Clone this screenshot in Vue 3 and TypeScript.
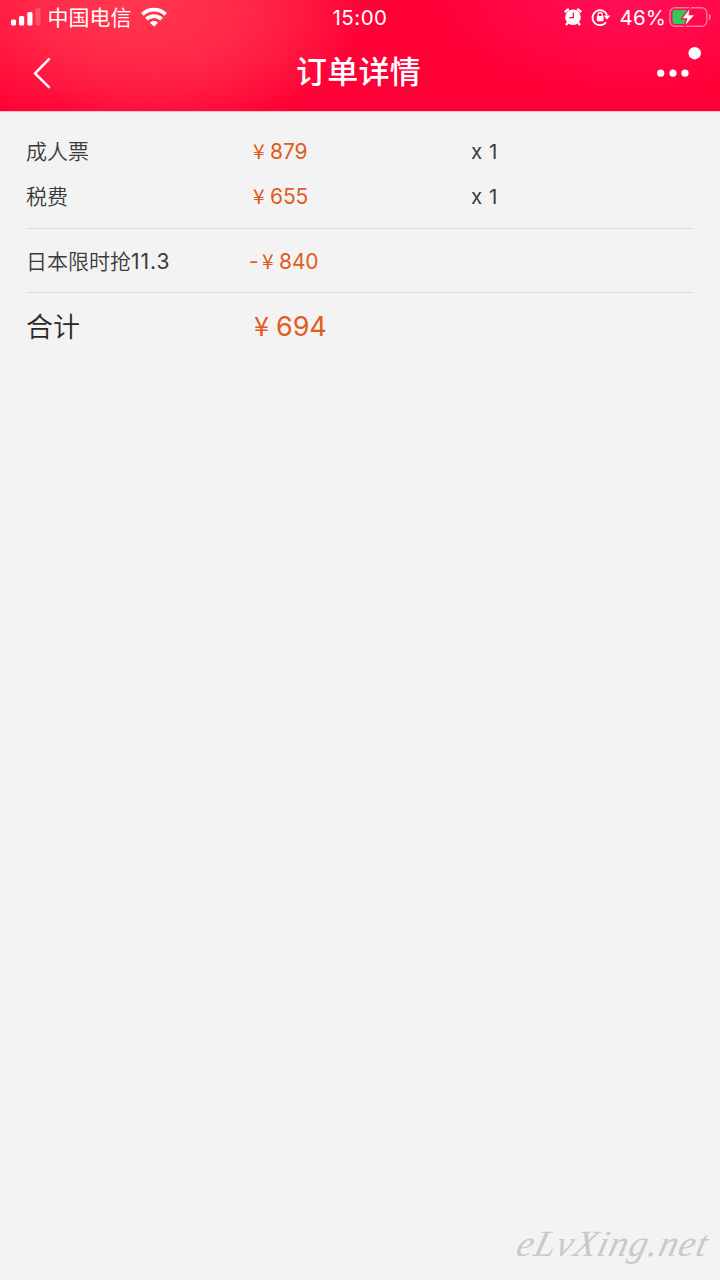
<script setup lang="ts">
interface Fare {
  label: string
  amount: string
  quantity: number
}

const fares: Fare[] = [
  { label: '成人票', amount: '879', quantity: 1 },
  { label: '税费', amount: '655', quantity: 1 },
]
</script>

<template>
  <main class="screen">
    <header class="header">
      <div class="status">
        <div class="status-left">
          <svg class="signal" width="30" height="18" viewBox="0 0 30 18" fill="#fff">
            <rect x="0" y="11.5" width="5" height="6" rx="1.5" />
            <rect x="8" y="8" width="5.2" height="9.5" rx="1.5" />
            <rect x="16.3" y="4" width="5.2" height="13.5" rx="1.5" />
            <rect x="24.5" y="0" width="5" height="17.5" rx="1.5" opacity=".2" />
          </svg>
          <span class="carrier">中国电信</span>
          <svg class="wifi" width="26" height="20" viewBox="0 0 26 20" fill="none" stroke="#fff" stroke-width="3.8">
            <path d="M1.3 7.4C7.8 1 18.2 1 24.7 7.4" />
            <path d="M5.4 12.2C9.6 8 16.4 8 20.6 12.2" />
            <path d="M13 19.6L8.9 15.7Q13 12 17.1 15.7Z" fill="#fff" stroke="none" />
          </svg>
        </div>
        <time class="clock">15:00</time>
        <div class="status-right">
          <svg class="alarm" width="18" height="18" viewBox="0 0 18 18">
            <circle cx="9" cy="9.2" r="7.8" fill="#fff" />
            <path d="M1.5 3.5L4 1.5M14 1.5L16.5 3.5M4 14.5L2.6 16.3M14 14.5L15.4 16.3" stroke="#fff" stroke-width="2.3" stroke-linecap="round" />
            <path d="M9.3 4.5V9.6H5.2" fill="none" stroke="#ff0748" stroke-width="1.3" />
          </svg>
          <svg class="lock" width="20" height="18" viewBox="0 0 20 18" fill="none" stroke="#fff">
            <path d="M15 14.3A7.5 7.5 0 1 1 16.1 7.2" stroke-width="1.8" />
            <path d="M12.7 7.5H19.3L16 11.8Z" fill="#fff" stroke="none" />
            <rect x="5.8" y="8" width="6.8" height="5.2" rx=".7" fill="#fff" stroke="none" />
            <path d="M7.2 8.4V6.5a2 2 0 0 1 4 0v1.9" stroke-width="1.3" />
          </svg>
          <span class="percent">46%</span>
          <svg class="battery" width="44" height="22" viewBox="0 0 44 22">
            <rect x="1" y="1.7" width="36.8" height="18.6" rx="5" fill="none" stroke="#fff" stroke-opacity=".45" stroke-width="1.4" />
            <path d="M39.8 7.7c2.7.7 2.7 5.9 0 6.6Z" fill="#fff" opacity=".45" />
            <path d="M6 4H18L12.4 13H17L15.8 18H6Q3.5 18 3.5 15.5V6.5Q3.5 4 6 4Z" fill="#35c759" />
            <path d="M21.6 .8L12.4 12.8H17.7L15 21.4L26.2 8.7H20.2Z" fill="#fff" stroke="#fa1449" stroke-width="1.2" />
          </svg>
        </div>
      </div>
      <nav class="nav">
        <svg class="back" width="20" height="34" viewBox="0 0 20 34" fill="none" stroke="#fff" stroke-width="2.5" stroke-linecap="round" stroke-linejoin="round">
          <path d="M18 3.2L4 17.3L18 31.2" />
        </svg>
        <h1 class="title">订单详情</h1>
        <svg class="more" width="46" height="36" viewBox="0 0 46 36" fill="#fff">
          <circle cx="4.7" cy="27.2" r="3.6" />
          <circle cx="17" cy="27.2" r="3.6" />
          <circle cx="29" cy="27.2" r="3.6" />
          <circle cx="38.7" cy="7.2" r="6.2" />
        </svg>
      </nav>
    </header>

    <section class="bill">
      <div class="fares">
        <div v-for="fare in fares" :key="fare.label" class="row">
          <span class="label">{{ fare.label }}</span>
          <span class="price"><i class="yen">¥</i>{{ fare.amount }}</span>
          <span class="quantity">x {{ fare.quantity }}</span>
        </div>
      </div>
      <div class="row discount">
        <span class="label">日本限时抢<b class="promo-date">11.3</b></span>
        <span class="price deduction"><i class="minus">-</i><i class="yen">¥</i>840</span>
      </div>
      <div class="row total">
        <span class="label">合计</span>
        <span class="price"><i class="yen">¥</i>694</span>
      </div>
    </section>

    <footer class="watermark"><span class="mark">eLvXing.net</span></footer>
  </main>
</template>

<style>
body {
  margin: 0;
  background: #f3f3f3;
}
</style>

<style scoped>
.screen {
  box-sizing: border-box;
  width: 720px;
  height: 1280px;
  display: flex;
  flex-direction: column;
  overflow: hidden;
  background: #f3f3f3;
  color: #3b3b3b;
  font-family: Inter, "Noto Sans CJK SC", sans-serif;
}
.header {
  height: 111px;
  flex: none;
  color: #fff;
  background:
    radial-gradient(ellipse 210px 115px at 630px -12px, #ff1464cc, #ff074400),
    radial-gradient(ellipse 170px 110px at 180px 30px, #ff314c99, #ff003600),
    radial-gradient(ellipse 245px 125px at 130px 5px, #ff3a50 0%, #ff314cbb 45%, #ff003600 100%),
    #ff0036;
  border-bottom: 1px solid #f9c3cc;
}
.status {
  height: 34px;
  display: grid;
  grid-template-columns: 1fr 80px 1fr;
  align-items: center;
}
.status-left,
.status-right {
  display: flex;
  align-items: center;
}
.status-left { padding-left: 10.5px; }
.status-right { justify-content: flex-end; padding-right: 7px; }
.signal { margin-right: 7px; }
.carrier { padding-top: 1px; font-size: 21px; line-height: 30px; white-space: nowrap; }
.wifi { margin-left: 9px; }
.clock {
  text-align: center;
  font-size: 20.5px;
  letter-spacing: .5px;
  white-space: nowrap;
}
.lock { margin-left: 9px; }
.percent { margin: 0 3px 0 9px; font-size: 20.5px; letter-spacing: .1px; }
.nav {
  height: 77px;
  display: grid;
  grid-template-columns: 1fr auto 1fr;
  align-items: start;
}
.back { margin: 22px 0 0 31px; }
.title {
  margin: 16px 3px 0 0;
  font-size: 31px;
  line-height: 44px;
  font-weight: 500;
  letter-spacing: .25px;
}
.more { justify-self: end; margin: 12px 18px 0 0; }
.bill {
  padding: 16px 26px 0;
  font-size: 21px;
}
.row {
  height: 45px;
  display: grid;
  grid-template-columns: 226px 219px 1fr;
  align-items: center;
  line-height: 30px;
  white-space: nowrap;
}
.fares {
  padding-bottom: 10px;
  border-bottom: 1px solid #dfdfdf;
}
.label {
  padding-bottom: 1px;
  font-family: "Noto Sans CJK SC", sans-serif;
  font-weight: 350;
}
.price { color: #e05c20; letter-spacing: -.1px; }
.yen {
  display: inline-block;
  width: 17px;
  padding-left: 1px;
  font-style: normal;
  font-family: "Noto Sans CJK SC", sans-serif;
}
.quantity { padding-top: 3px; font-size: 20.5px; letter-spacing: .5px; }
.discount {
  height: 63px;
  border-bottom: 1px solid #dfdfdf;
}
.discount .label { padding-bottom: 0; }
.promo-date {
  font-family: Inter, sans-serif;
  font-weight: 400;
  letter-spacing: 1px;
}
.deduction { margin-left: -3px; }
.minus { display: inline-block; width: 12px; font-style: normal; }
.total {
  height: 66px;
  font-size: 27px;
  color: #292929;
}
.total .label { padding-bottom: 0; }
.total .yen { width: 22px; padding-left: 2px; }
.watermark {
  margin-top: auto;
  height: 58px;
  display: flex;
  justify-content: flex-end;
  padding-right: 13px;
  color: #c9c9c9;
}
.mark {
  font-family: "Brush Script MT", "Liberation Serif", cursive;
  font-size: 37px;
  line-height: 44px;
  font-style: italic;
  letter-spacing: 1.2px;
  transform: skewX(-14deg);
}
</style>
